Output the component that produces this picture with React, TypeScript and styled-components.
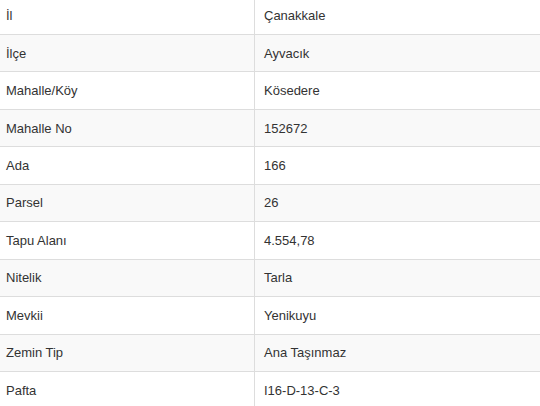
import styled, { createGlobalStyle } from 'styled-components';

const GlobalStyle = createGlobalStyle`
  html, body {
    margin: 0;
    padding: 0;
    background: #fff;
    overflow: hidden;
  }
  body {
    font-family: "Liberation Sans", Arial, sans-serif;
    font-size: 13px;
    color: #333;
  }
`

const Table = styled.div`
  margin: -2.44px 0 0 -2px;
  width: calc(100% + 4px);
`

const Row = styled.div<{ $striped: boolean }>`
  display: grid;
  grid-template-columns: 257px 1fr;
  height: 37.44px;
  box-sizing: border-box;
  border-bottom: 1px solid #ddd;
  background-color: ${({ $striped }) => ($striped ? '#f9f9f9' : '#fff')};
`

const Label = styled.div`
  display: flex;
  align-items: center;
  padding: 0 8px;
  border-right: 1px solid #ddd;
`

const Value = styled.div`
  display: flex;
  align-items: center;
  padding: 0 9px;
`

const rows: [string, string][] = [
  ['İl', 'Çanakkale'],
  ['İlçe', 'Ayvacık'],
  ['Mahalle/Köy', 'Kösedere'],
  ['Mahalle No', '152672'],
  ['Ada', '166'],
  ['Parsel', '26'],
  ['Tapu Alanı', '4.554,78'],
  ['Nitelik', 'Tarla'],
  ['Mevkii', 'Yenikuyu'],
  ['Zemin Tip', 'Ana Taşınmaz'],
  ['Pafta', 'I16-D-13-C-3'],
]

export default function App() {
  return (
    <>
      <GlobalStyle />
      <Table>
        {rows.map(([label, value], i) => (
          <Row key={label} $striped={i % 2 === 1}>
            <Label>{label}</Label>
            <Value>{value}</Value>
          </Row>
        ))}
      </Table>
    </>
  )
}
